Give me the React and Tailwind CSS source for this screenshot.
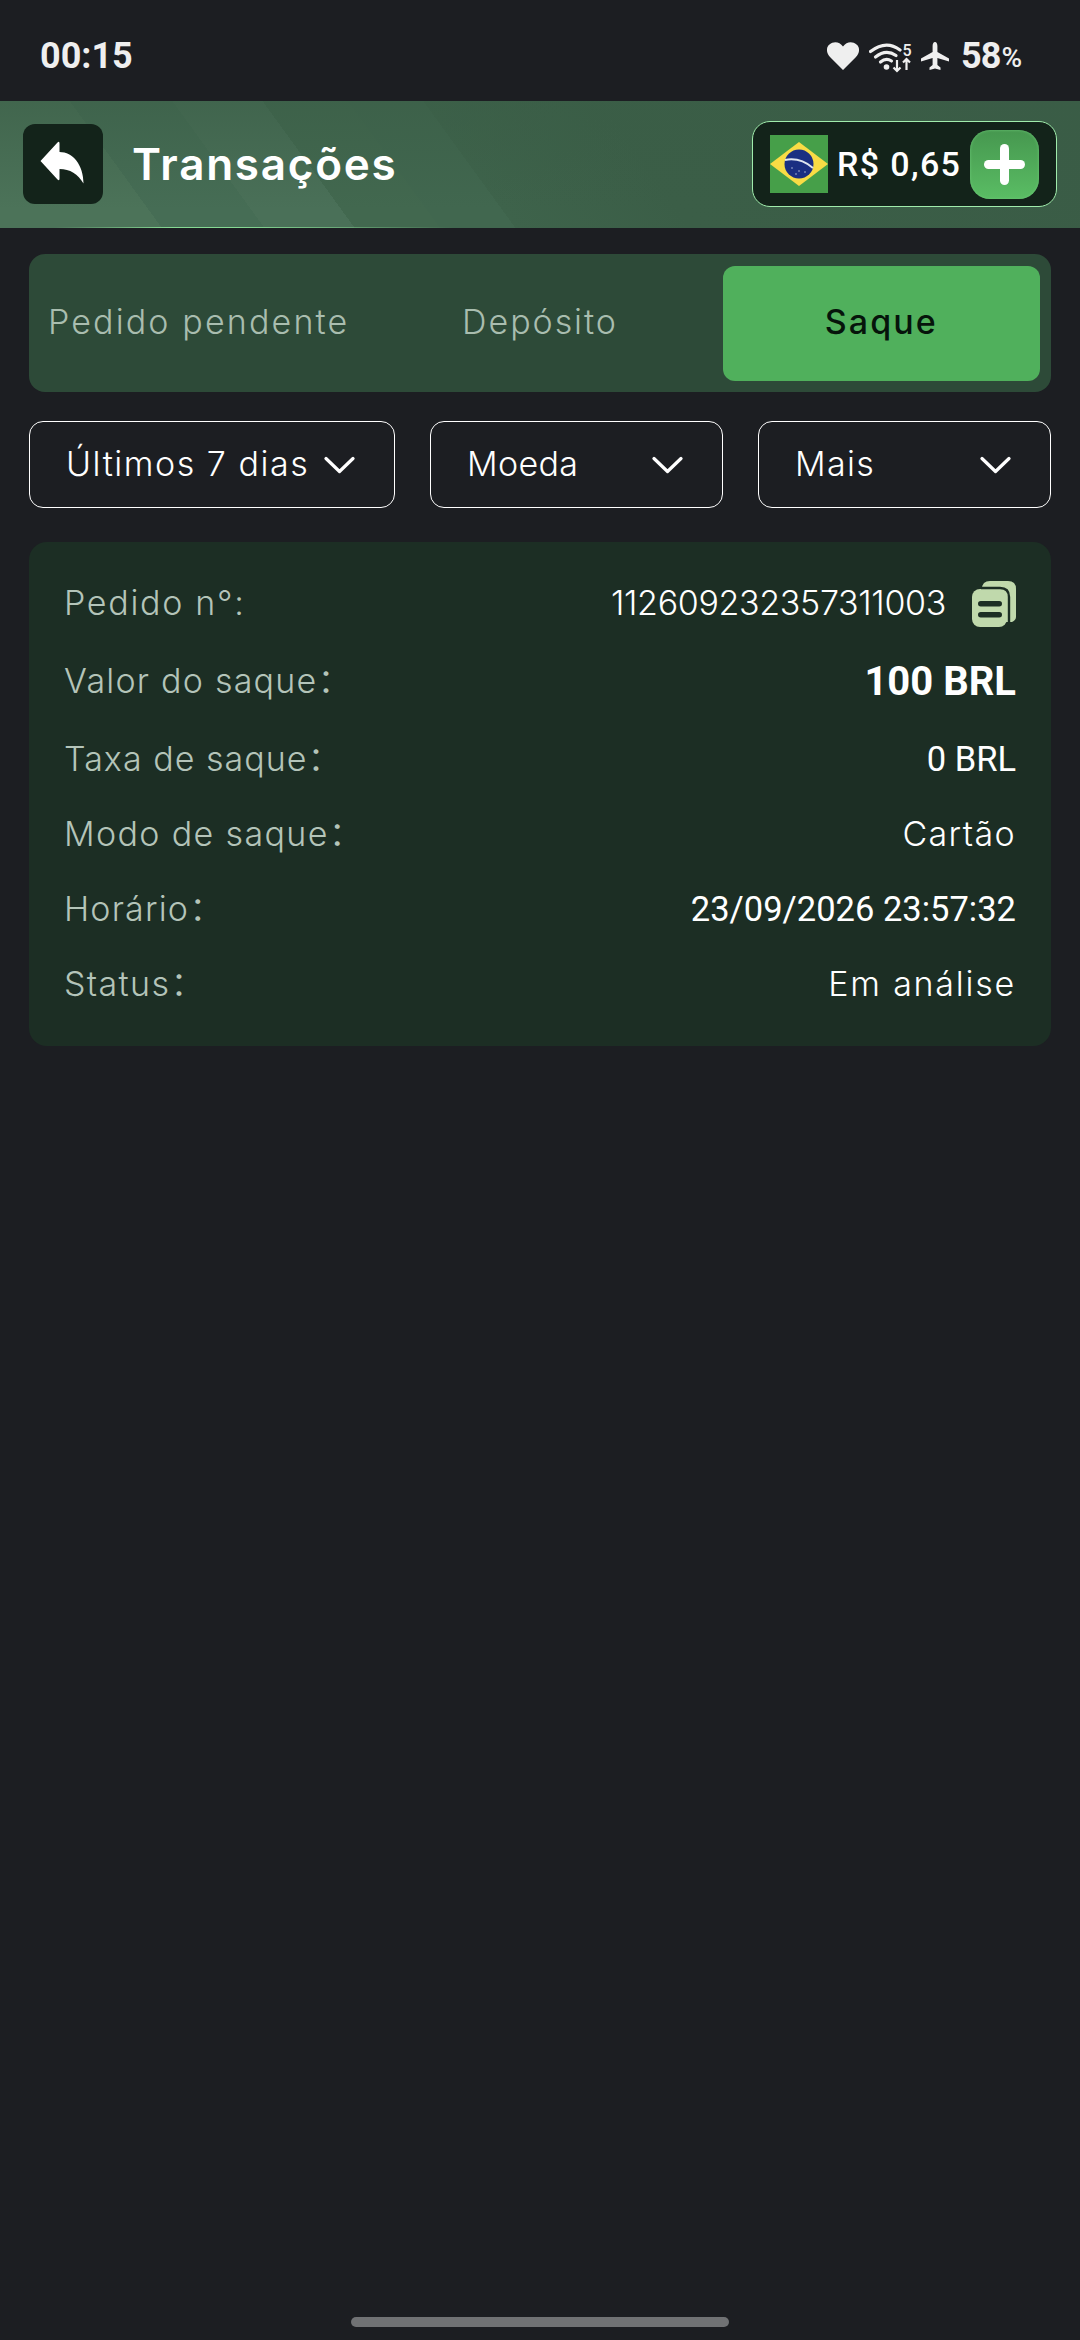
import React from 'react';

const rows = [
  { label: 'Pedido n°:', value: '112609232357311003', h: 'h-[75px]', kind: 'order', track: 'tracking-[0.05em]' },
  { label: 'Valor do saque：', value: '100 BRL', h: 'h-[81px]', kind: 'amount', track: 'tracking-[0.036em]' },
  { label: 'Taxa de saque：', value: '0 BRL', h: 'h-[75px]', kind: 'num', track: 'tracking-[0.03em]' },
  { label: 'Modo de saque：', value: 'Cartão', h: 'h-[75px]', kind: 'text', valueTrack: 'tracking-[0.04em]', track: 'tracking-[0.04em]' },
  { label: 'Horário：', value: '23/09/2026 23:57:32', h: 'h-[75px]', kind: 'num', track: 'tracking-[0.035em]' },
  { label: 'Status：', value: 'Em análise', h: 'h-[75px]', kind: 'text', valueTrack: 'tracking-[0.052em]', track: 'tracking-[0.04em]' },
];

const filters = [
  { label: 'Últimos 7 dias', width: 'w-[366px]', track: 'tracking-[0.045em]' },
  { label: 'Moeda', width: 'w-[293px]', track: 'tracking-[0.01em]' },
  { label: 'Mais', width: 'w-[293px]', track: 'tracking-[0.04em]' },
];

function Chevron() {
  return (
    <svg width="31" height="18" viewBox="0 0 31 18" fill="none" stroke="white" strokeWidth="3.2" strokeLinecap="round" strokeLinejoin="round" className="shrink-0">
      <polyline points="2,2.5 15.5,15.5 29,2.5" />
    </svg>
  );
}

function BackIcon() {
  return (
    <svg width="80" height="80" viewBox="0 0 80 80" fill="white">
      <path d="M17.5 37 L34.5 18.5 Q36.5 16.5 36.5 19.5 V28 C50 28 60.5 41 60.5 59.5 C55 50 47 45 36.5 45 V54.5 Q36.5 57.5 34.5 55.5 Z" />
    </svg>
  );
}

function CopyIcon() {
  return (
    <svg width="44" height="46" viewBox="0 0 44 46" className="shrink-0">
      <path d="M10 8 Q10 0 18 0 H36 Q44 0 44 8 V36 Q44 39 40 41 H10 Z" fill="#c0d9ac" />
      <rect x="0" y="8" width="35" height="38" rx="8" fill="#c0d9ac" />
      <path d="M9 7 H28 Q37 7 37 16 V41" fill="none" stroke="#1c2e24" strokeWidth="2.4" />
      <rect x="6" y="20" width="24" height="5.5" rx="2.75" fill="#1c2e24" />
      <rect x="6" y="31" width="24" height="5.5" rx="2.75" fill="#1c2e24" />
    </svg>
  );
}

function Flag() {
  return (
    <svg width="58" height="58" viewBox="0 0 58 58" className="shrink-0">
      <rect width="58" height="58" fill="#469f49" />
      <polygon points="29,7 58,29 29,51 0,29" fill="#f8dc45" />
      <circle cx="29" cy="29" r="14.5" fill="#1a2f82" />
      <path d="M15 25 Q30 22 43 33" stroke="#dfe6ef" strokeWidth="2" fill="none" />
      <g fill="#cfd8ea">
        <circle cx="22" cy="33" r="0.7" />
        <circle cx="29" cy="36" r="0.7" />
        <circle cx="35" cy="37" r="0.7" />
        <circle cx="26" cy="39" r="0.7" />
      </g>
    </svg>
  );
}

function WifiIcon() {
  return (
    <svg width="44" height="34" viewBox="0 -4 44 34" fill="none" stroke="#efefef" className="shrink-0">
      <path d="M1.5 8.5 Q17 -3.5 31 7" strokeWidth="3.2" strokeLinecap="round" />
      <path d="M6.5 14 Q17 5.5 27 12.5" strokeWidth="3.2" strokeLinecap="round" />
      <path d="M11.5 19 Q17 14.5 22.5 18" strokeWidth="3.2" strokeLinecap="round" />
      <circle cx="17.5" cy="24" r="2.8" fill="#efefef" stroke="none" />
      <path d="M28 17 V28 M24.5 24.5 L28 28 L31.5 24.5" strokeWidth="2.2" />
      <path d="M37.5 27 V16 M34 19.5 L37.5 16 L41 19.5" strokeWidth="2.2" />
      <text x="33.5" y="12.5" fontSize="16" fontWeight="500" fontFamily="Roboto, sans-serif" fill="#efefef" stroke="none">5</text>
    </svg>
  );
}

function StatusBar() {
  return (
    <div className="h-[101px] flex items-center justify-between pl-[40px] pr-[58px] pt-[10px] text-[#efefef] font-['Roboto',sans-serif]">
      <span className="text-[36px] font-bold leading-none">00:15</span>
      <div className="flex items-center">
        <svg width="32" height="28" viewBox="0 0 32 28" fill="#efefef" className="shrink-0 mr-[10px]">
          <path d="M16 28 L3 15 C-1 11 -1 5 2.5 2.5 C6.5 -1 12.5 -0.5 16 4.5 C19.5 -0.5 25.5 -1 29.5 2.5 C33 5 33 11 29 15 Z" />
        </svg>
        <WifiIcon />
        <svg width="28" height="28" viewBox="0 0 28 28" fill="#efefef" className="shrink-0 ml-[8px] mr-[12px]">
          <path d="M14 0 C15.6 0 16.4 2 16.4 4 V10 L28 16.5 V19.5 L16.4 16 V23 L19.5 25.5 V28 L14 26.5 L8.5 28 V25.5 L11.6 23 V16 L0 19.5 V16.5 L11.6 10 V4 C11.6 2 12.4 0 14 0 Z" />
        </svg>
        <span className="text-[36px] font-bold leading-none tracking-[-1px]">58</span>
        <span className="text-[28px] font-medium leading-none ml-[1px] mt-[4px]">%</span>
      </div>
    </div>
  );
}

function Header() {
  return (
    <div className="bg-[linear-gradient(to_bottom,rgba(58,93,70,0.6),rgba(58,93,70,0)_85%),linear-gradient(54deg,#4c7359_0,#4c7359_131px,#466d55_131px,#466d55_214px,#4a7058_214px,#4a7058_287px,#42684f_287px,#42684f_356px,#41674f_356px,#41674f_417px,#3e634b_417px,#3b5e47_560px,#3a5c46_100%)]">
      <div className="h-[126px] flex items-center pl-[23px] pr-[23px]">
        <div className="w-[80px] h-[80px] rounded-[12px] bg-[#13231a] shrink-0">
          <BackIcon />
        </div>
        <h1 className="ml-[29px] text-white text-[44px] font-semibold leading-none font-['Inter',sans-serif] tracking-[0.04em]">Transações</h1>
        <div className="ml-auto w-[305px] h-[86px] rounded-[18px] border-[1.5px] border-[#a0ecac] bg-[#13231a] flex items-center pl-[17px] pr-[17px]">
          <Flag />
          <span className="ml-[9px] text-white text-[34px] font-medium leading-none tracking-[0.04em] font-['Roboto',sans-serif]">R$ 0,65</span>
          <div className="ml-auto w-[69px] h-[69px] rounded-[20px] bg-[linear-gradient(to_bottom,#46974f,#5abd64)] shadow-[inset_0_0_3px_#6cc877] flex items-center justify-center shrink-0">
            <svg width="41" height="41" viewBox="0 0 41 41" fill="white">
              <rect x="0" y="16" width="41" height="9" rx="4.5" />
              <rect x="16" y="0" width="9" height="41" rx="4.5" />
            </svg>
          </div>
        </div>
      </div>
      <div className="h-[1px] bg-[linear-gradient(to_right,transparent_5%,#86d993_16%,#86d993_22%,transparent_42%)]" />
    </div>
  );
}

function Tabs() {
  return (
    <div className="mt-[26px] h-[138px] rounded-[16px] bg-[#2d4a38] grid grid-cols-3 gap-[24px] px-[11px] pt-[12px] pb-[11px] text-[34px] font-['Inter',sans-serif]">
      <div className="flex items-center justify-center pb-[5px] whitespace-nowrap text-[#a9bdaf] font-[350] tracking-[0.063em]">Pedido pendente</div>
      <div className="flex items-center justify-center pb-[5px] text-[#a9bdaf] font-[350] tracking-[0.057em]">Depósito</div>
      <div className="flex items-center justify-center pb-[5px] rounded-[12px] bg-[#50b05c] text-[#06140b] font-medium tracking-[0.06em]">Saque</div>
    </div>
  );
}

function Filters() {
  return (
    <div className="mt-[29px] flex gap-[35px] text-white text-[34px] font-[350] font-['Inter',sans-serif]">
      {filters.map((filter) => (
        <div key={filter.label} className={`${filter.width} h-[87px] rounded-[14px] border-[1.5px] border-white flex items-center justify-between pl-[36px] pr-[39px]`}>
          <span className={`pb-[3px] ${filter.track}`}>{filter.label}</span>
          <Chevron />
        </div>
      ))}
    </div>
  );
}

function DetailCard() {
  return (
    <div className="mt-[34px] rounded-[18px] bg-[#1c2e24] px-[35px] py-[24px]">
      {rows.map((row) => (
        <div key={row.label} className={`flex items-center justify-between ${row.h}`}>
          <span className={`pb-[2px] text-[34px] text-[#b4c4b9] font-[350] font-['Inter','Noto_Sans_CJK_SC',sans-serif] ${row.track}`}>{row.label}</span>
          {row.kind === 'order' && (
            <div className="flex items-center gap-[26px]">
              <span className="pb-[2px] text-[34px] font-[350] text-white tracking-[-0.01em] font-['Inter',sans-serif]">{row.value}</span>
              <CopyIcon />
            </div>
          )}
          {row.kind === 'amount' && (
            <span className="text-[40px] font-bold text-white font-['Roboto',sans-serif]">{row.value}</span>
          )}
          {row.kind === 'num' && (
            <span className="text-[34.5px] text-white font-['Roboto',sans-serif]">{row.value}</span>
          )}
          {row.kind === 'text' && (
            <span className={`pb-[2px] text-[34px] font-[350] text-white font-['Inter',sans-serif] ${row.valueTrack}`}>{row.value}</span>
          )}
        </div>
      ))}
    </div>
  );
}

export default function App() {
  return (
    <div className="min-h-[2340px] bg-[#1c1e22] flex flex-col">
      <StatusBar />
      <Header />
      <div className="px-[29px]">
        <Tabs />
        <Filters />
        <DetailCard />
      </div>
      <div className="mt-auto pb-[13px] flex justify-center">
        <div className="w-[378px] h-[10px] rounded-full bg-[#707274]" />
      </div>
    </div>
  );
}
